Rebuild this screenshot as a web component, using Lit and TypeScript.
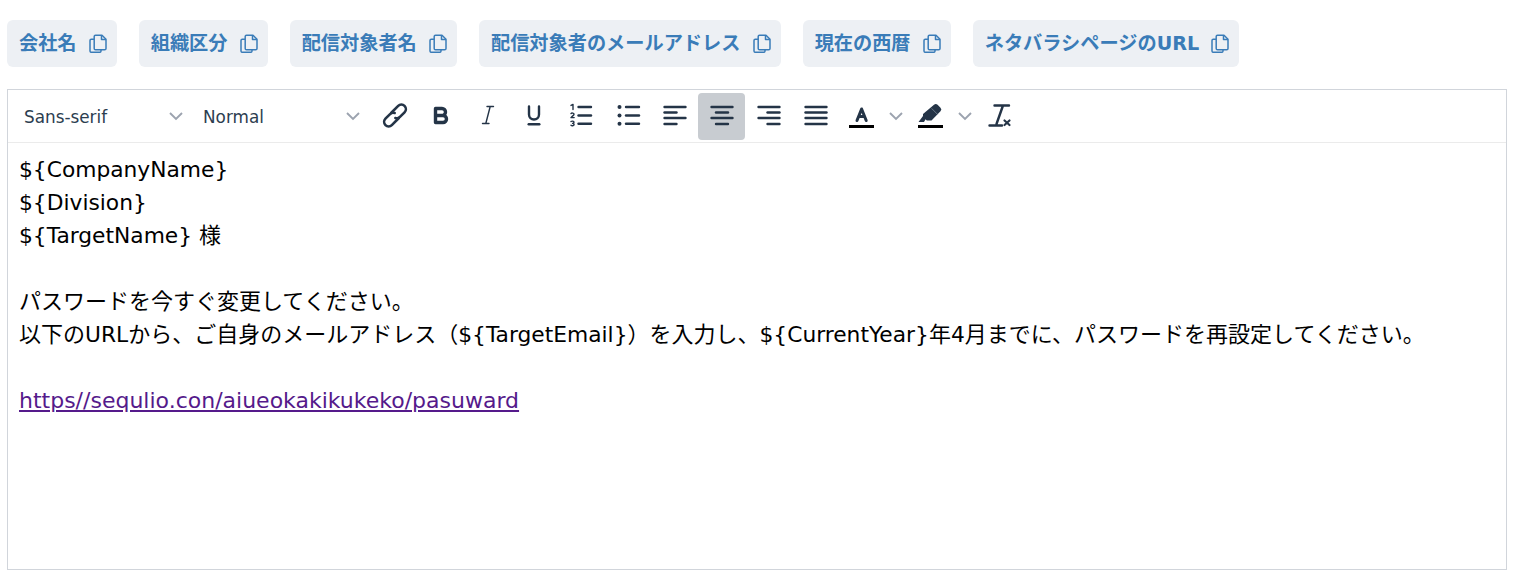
import { LitElement, html, css, svg } from "lit";
import { customElement } from "lit/decorators.js";

const copy = html`<svg class="copy" viewBox="0 0 18 19"><path d="M6.5 1.2H13l4 4v9.3a1.3 1.3 0 0 1-1.3 1.3H6.5a1.3 1.3 0 0 1-1.3-1.3v-12a1.3 1.3 0 0 1 1.3-1.3Z"/><path d="M12.5 1.2v4.3H17"/><path d="M5.2 5.2H2.3A1.3 1.3 0 0 0 1 6.5V17a1.3 1.3 0 0 0 1.3 1.3h8.4A1.3 1.3 0 0 0 12 17v-1.2"/></svg>`;
const chev = html`<svg class="chev" viewBox="0 0 18 18"><path d="M3 6l6 6 6-6"/></svg>`;
const buttons = ["会社名", "組織区分", "配信対象者名", "配信対象者のメールアドレス", "現在の西暦", "ネタバラシページのURL"];

const lines = (a: number[][]) => a.map(([x1, y, x2]) => svg`<path class="w" d="M${x1} ${y}H${x2}"/>`);
const ys = [6, 11.5, 17, 23];
const latin = (t: string) => t.split(/([\x20-\x7e]+)/).map((p, i) => (i % 2 ? html`<span class="l">${p}</span>` : p));

const icons = [
  svg`<g transform="translate(17 14.5) rotate(-45)"><path class="lk" d="M-1 -4.5H9a4.5 4.5 0 0 1 0 9H2.5a4.5 4.5 0 0 1-4-2.5"/><path class="lk" d="M1 4.5H-9a4.5 4.5 0 0 1 0-9H-2.5a4.5 4.5 0 0 1 4 2.5"/></g>`,
  svg`<path class="b" d="M10.5 7.5h6.5a3.5 3.5 0 0 1 0 7h-6.5ZM10.5 14.5h7.5a3.5 3.5 0 0 1 0 7h-7.5Z"/>`,
  svg`<path class="t" d="M15 5.5h6.5M10.5 22.5H17M18.2 5.5l-4.4 17"/>`,
  svg`<path class="w" d="M10 5.5v8a5 5 0 0 0 10 0v-8"/><rect class="f" x="8.5" y="22" width="13" height="2.4" rx="1.2"/>`,
  svg`${lines([[12.5, 6, 25], [12.5, 14.5, 25], [12.5, 22.7, 25]])}<path class="t" d="M5 4.4l2-1v5.2M5 12.6c.5-.8 3-.8 3 .6 0 1.2-2 2-3 3.4h3.2M5 20.6c.6-.6 3-.8 3 .6 0 .7-.5 1-1.4 1.2 1 .1 1.5.5 1.5 1.2 0 1.4-2.4 1.4-3.1.6"/>`,
  svg`${lines([[13, 6, 26], [13, 14.5, 26], [13, 22.7, 26]])}<circle class="f" cx="6.5" cy="6" r="2"/><circle class="f" cx="6.5" cy="14.5" r="2"/><circle class="f" cx="6.5" cy="22.7" r="2"/>`,
  svg`${lines([[4.5, ys[0], 25.5], [4.5, ys[1], 16.5], [4.5, ys[2], 25.5], [4.5, ys[3], 16.5]])}`,
  svg`${lines([[4.5, ys[0], 25.5], [9, ys[1], 21], [4.5, ys[2], 25.5], [9, ys[3], 21]])}`,
  svg`${lines([[4.5, ys[0], 25.5], [13.5, ys[1], 25.5], [4.5, ys[2], 25.5], [13.5, ys[3], 25.5]])}`,
  svg`${lines([[4.5, ys[0], 25.5], [4.5, ys[1], 25.5], [4.5, ys[2], 25.5], [4.5, ys[3], 25.5]])}`,
];

const colorIcon = html`<svg class="ic" viewBox="0 0 30 30"><path class="a" d="M10 19.5L14.6 8l4.6 11.5M11.8 15.5h5.6"/><rect x="2" y="24" width="25" height="3" fill="#000"/></svg>`;
const markIcon = html`<svg class="ic" viewBox="0 0 30 30"><path class="f" d="M18 3.8a2.6 2.6 0 0 1 3.6 0l2.9 2.9a2.6 2.6 0 0 1 0 3.6L15.5 19.5H10.8L9.6 18.3 8 21H2.5L7 15v-2Z"/><path d="M15.6 7.4l6 6" stroke="#8a95a3" stroke-width=".7"/><rect x="2" y="24" width="25" height="3" fill="#000"/></svg>`;
const cleanIcon = html`<svg class="ic" viewBox="0 0 30 30"><path class="w" d="M9.5 4.5H24M18 4.5L11.5 23M4.5 24.5H17"/><path class="x" d="M19.5 19.5l5 4.5M24.5 19.5l-5 4.5"/></svg>`;

@customElement("app-root")
export class AppRoot extends LitElement {
  static styles = css`
    :host { display: block; font-family: "Noto Sans CJK JP", sans-serif; }
    .l { font-family: "DejaVu Sans", sans-serif; font-size: 0.99em; }
    .page { padding: 20px 10px 12px 7px; }
    .btns { display: flex; gap: 22px; }
    .btn { display: flex; align-items: center; gap: 12.2px; height: 47px; padding: 0 10px 0 12px; box-sizing: border-box;
      background: #edf0f4; border-radius: 6px; color: #3a7cb8; font-weight: 700; font-size: 19.2px; }
    .btn > span { position: relative; top: -2px; }
    .btn .l { font-size: 1em; }
    .copy { width: 18px; height: 19px; fill: none; stroke: #3a7cb8; stroke-width: 1.5; stroke-linejoin: round; flex: none; position: relative; top: -.5px; }
    .editor { margin-top: 22px; height: 481px; box-sizing: border-box; border: 1px solid #d1d5db; }
    .bar { display: flex; align-items: center; height: 53px; box-sizing: border-box; border-bottom: 1px solid #ebebeb; padding-left: 8px; }
    .pick { display: flex; align-items: center; justify-content: space-between; font-size: 17px; color: #2c3e50; padding-left: 8px; box-sizing: border-box; }
    .pick .l { position: relative; top: 1px; }
    .pick.font { width: 179px; padding-right: 10px; }
    .pick.size { width: 174px; padding-right: 7px; }
    .chev { width: 18px; height: 18px; fill: none; stroke: #9ca3af; stroke-width: 1.9; flex: none; }
    .ib { width: 47px; height: 47px; display: flex; align-items: center; justify-content: center; border-radius: 4px; flex: none; }
    .ib.on { background: #c8ccd1; }
    .ic { width: 30px; height: 30px; flex: none; overflow: visible; }
    .tail { display: flex; align-items: center; gap: 10.5px; padding-left: 7.5px; }
    .w, .b, .t, .lk, .a, .x { fill: none; stroke: #243447; stroke-linecap: round; stroke-linejoin: round; }
    .w { stroke-width: 2.4; } .b { stroke-width: 3.4; } .t { stroke-width: 1.4; } .lk { stroke-width: 2.6; } .a { stroke-width: 3; } .x { stroke-width: 2.2; }
    .f { fill: #243447; }
    .body { padding: 8px 11px; font-size: 22px; line-height: 33px; color: #000; }
    .line { min-height: 33px; height: 33px; white-space: nowrap; }
    a { color: #551a8b; text-decoration: underline; }
    a .l { font-size: 1em; }
  `;

  render() {
    return html`<div class="page">
      <div class="btns">${buttons.map((b) => html`<div class="btn"><span>${latin(b)}</span>${copy}</div>`)}</div>
      <div class="editor">
        <div class="bar">
          <div class="pick font"><span class="l">Sans-serif</span>${chev}</div>
          <div class="pick size"><span class="l">Normal</span>${chev}</div>
          ${icons.map((ic, i) => html`<div class="ib ${i === 7 ? "on" : ""}"><svg class="ic" viewBox="0 0 30 30">${ic}</svg></div>`)}
          <div class="tail">${colorIcon}${chev}${markIcon}${chev}${cleanIcon}</div>
        </div>
        <div class="body">
          <div class="line">${latin("${CompanyName}")}</div>
          <div class="line">${latin("${Division}")}</div>
          <div class="line">${latin("${TargetName} 様")}</div>
          <div class="line"></div>
          <div class="line">パスワードを今すぐ変更してください。</div>
          <div class="line">${latin("以下のURLから、ご自身のメールアドレス（${TargetEmail}）を入力し、${CurrentYear}年4月までに、パスワードを再設定してください。")}</div>
          <div class="line"></div>
          <div class="line"><a>${latin("https//sequlio.con/aiueokakikukeko/pasuward")}</a></div>
        </div>
      </div>
    </div>`;
  }
}
